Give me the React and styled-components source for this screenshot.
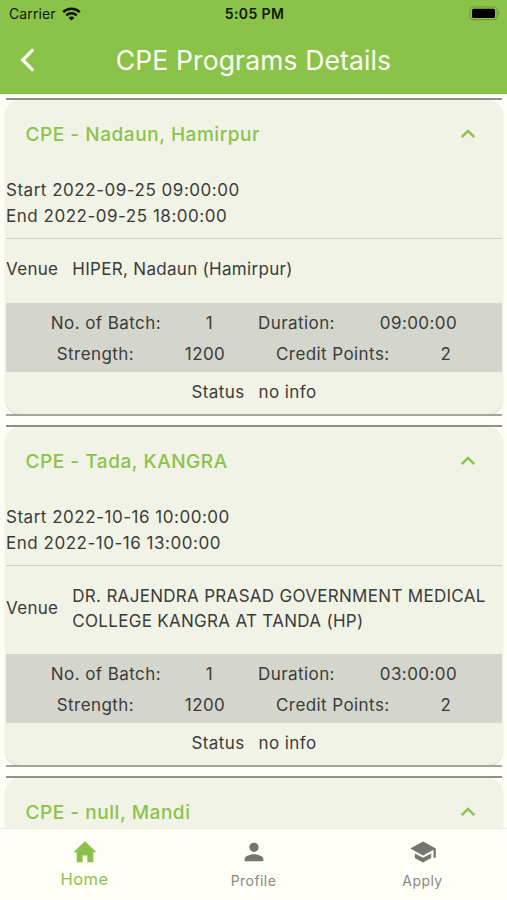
import React from "react";
import styled, { createGlobalStyle } from "styled-components";
import { MdPerson, MdSchool } from "react-icons/md";

const GlobalStyle = createGlobalStyle`
  * { box-sizing: border-box; }
  body { margin: 0; background: #fefef6; }
`;

const Screen = styled.div`
  width: 507px;
  height: 900px;
  overflow: hidden;
  display: flex;
  flex-direction: column;
  background: #fefef6;
  color: #3b3c38;
  font-family: Inter, Roboto, sans-serif;
  font-size: 17px;
  white-space: nowrap;
`;

const Header = styled.header`
  flex: none;
  height: 94px;
  background: #8bc34a;
`;

const StatusBar = styled.div`
  display: grid;
  grid-template-columns: 1fr auto 1fr;
  align-items: center;
  height: 27px;
  padding: 0 7px 0 9px;
  color: #10180a;
  font-size: 14px;
  line-height: 27px;
`;

const Carrier = styled.div`
  display: flex;
  align-items: center;
  gap: 6px;
  letter-spacing: 0.1px;
`;

const Clock = styled.div`
  font-weight: 600;
  letter-spacing: 0.4px;
`;

const Battery = styled.svg`
  justify-self: end;
  display: block;
`;

const TitleBar = styled.div`
  display: grid;
  grid-template-columns: 60px 1fr 60px;
  align-items: center;
  height: 66px;
`;

const BackIcon = styled.svg`
  display: block;
  margin-left: 19px;
`;

const PageTitle = styled.h1`
  margin: 0;
  text-align: center;
  color: #fdfff6;
  font-size: 26.5px;
  font-weight: 400;
  line-height: 66px;
  letter-spacing: 0.13px;
`;

const List = styled.main`
  flex: 1;
  min-height: 0;
  overflow: hidden;
  padding: 4px 4px 0 5px;
`;

const Rule = styled.div`
  height: 2px;
  margin: 0 1px;
  background: ${(p) => p.$color || "#a3a49c"};
`;

const Card = styled.section`
  margin-bottom: 9px;
`;

const CardBody = styled.div`
  height: ${(p) => p.$height}px;
  border-radius: 15px;
  background: #f1f3e7;
  box-shadow: 0 1px 1px rgba(70, 75, 60, 0.22);
`;

const CardHeader = styled.div`
  display: flex;
  align-items: center;
  justify-content: space-between;
  height: 67px;
  padding: 1px 26px 0 20.5px;
  color: #8bc34a;
`;

const CardTitle = styled.h2`
  margin: 0;
  padding-top: 1px;
  font-size: 19px;
  font-weight: 500;
  line-height: 30px;
  letter-spacing: 0.55px;
`;

const Dates = styled.div`
  height: 71px;
  padding: 9.5px 2px 0 1px;
  line-height: 26.5px;
`;

const DateLine = styled.div`
  letter-spacing: 0.52px;
`;

const Divider = styled.div`
  height: 1px;
  margin: 0 1px;
  background: #cfd1c7;
`;

const Venue = styled.div`
  display: flex;
  align-items: center;
  gap: 14px;
  height: ${(p) => p.$height}px;
  padding: 0 0 3px 1px;
  line-height: 24.5px;
  letter-spacing: 0.3px;
`;

const VenueName = styled.div`
  white-space: pre-line;
`;

const Stats = styled.div`
  display: flex;
  flex-direction: column;
  height: 69px;
  margin: 0 1px;
  padding: 4.5px 0 2.5px;
  background: #d4d6cd;
`;

const StatRow = styled.div`
  display: flex;
  justify-content: space-evenly;
  height: 31px;
  line-height: 31px;
  letter-spacing: 0.42px;
`;

const Status = styled.div`
  display: flex;
  justify-content: center;
  gap: 14px;
  line-height: 40px;
  letter-spacing: 0.4px;
`;

const BottomNav = styled.nav`
  flex: none;
  display: grid;
  grid-template-columns: repeat(3, 1fr);
  height: 72px;
  border-top: 1px solid #ebece3;
  background: #fefef6;
`;

const NavItem = styled.div`
  display: flex;
  flex-direction: column;
  align-items: center;
  padding-top: 9px;
  color: ${(p) => (p.$active ? "#8bc34a" : "#757671")};

  svg { flex: none; width: 28px; height: 28px; }
`;

const NavLabel = styled.span`
  margin-top: ${(p) => (p.$active ? 3 : 5)}px;
  font-size: ${(p) => (p.$active ? 16.5 : 14)}px;
  line-height: 20px;
  letter-spacing: 0.45px;
  color: ${(p) => (p.$active ? "#8bc34a" : "#888984")};
`;

const programs = [
  {
    title: "CPE - Nadaun, Hamirpur",
    start: "2022-09-25 09:00:00",
    end: "2022-09-25 18:00:00",
    venue: "HIPER, Nadaun (Hamirpur)",
    duration: "09:00:00",
    venueHeight: 64,
    height: 314,
  },
  {
    title: "CPE - Tada, KANGRA",
    start: "2022-10-16 10:00:00",
    end: "2022-10-16 13:00:00",
    venue: "DR. RAJENDRA PRASAD GOVERNMENT MEDICAL\nCOLLEGE KANGRA AT TANDA (HP)",
    duration: "03:00:00",
    venueHeight: 88,
    height: 338,
  },
  { title: "CPE - null, Mandi", height: 314 },
];

function Chevron() {
  return (
    <svg width="18" height="12" viewBox="0 0 18 12" fill="none" stroke="currentColor" strokeWidth="2.4">
      <path d="M2.7 9.2 9 2.9l6.3 6.3" />
    </svg>
  );
}

function HomeIcon() {
  return (
    <svg viewBox="0 0 28 28" fill="currentColor">
      <path d="M14 3.2 25.6 14.2H22.3V24.2H16.3V17.6H11.7V24.2H5.7V14.2H2.4Z" />
    </svg>
  );
}

function ProgramCard({ program }) {
  return (
    <Card>
      <Rule $color="#8f908a" />
      <CardBody $height={program.height}>
        <CardHeader>
          <CardTitle>{program.title}</CardTitle>
          <Chevron />
        </CardHeader>
        {program.start && (
          <>
            <Dates>
              <DateLine>Start {program.start}</DateLine>
              <DateLine>End {program.end}</DateLine>
            </Dates>
            <Divider />
            <Venue $height={program.venueHeight}>
              <span>Venue</span>
              <VenueName>{program.venue}</VenueName>
            </Venue>
            <Stats>
              <StatRow>
                <span>No. of Batch:</span>
                <span>1</span>
                <span>Duration:</span>
                <span>{program.duration}</span>
              </StatRow>
              <StatRow>
                <span>Strength:</span>
                <span>1200</span>
                <span>Credit Points:</span>
                <span>2</span>
              </StatRow>
            </Stats>
            <Status>
              <span>Status</span>
              <span>no info</span>
            </Status>
          </>
        )}
      </CardBody>
      <Rule />
    </Card>
  );
}

export default function App() {
  return (
    <Screen>
      <GlobalStyle />
      <Header>
        <StatusBar>
          <Carrier>
            <span>Carrier</span>
            <svg width="19" height="14" viewBox="0 0 19 14" fill="none" stroke="#0b1005" strokeWidth="2.5">
              <path d="M1.2 5.1C5.9.6 13.1.6 17.8 5.1" />
              <path d="M4.3 8.3c3-2.8 7.4-2.8 10.4 0" />
              <path d="M9.5 13.6 6.6 10.7c1.6-1.5 4.2-1.5 5.8 0z" fill="#0b1005" stroke="none" />
            </svg>
          </Carrier>
          <Clock>5:05 PM</Clock>
          <Battery width="31" height="15" viewBox="0 0 31 15">
            <rect x="0.8" y="1" width="27.4" height="12.6" rx="3.8" fill="none" stroke="#6b9a3a" strokeWidth="1.1" />
            <rect x="3" y="2.7" width="23" height="9.4" rx="1.6" fill="#000" />
            <path d="M29.2 5.2c1.8.6 1.8 3.6 0 4.2z" fill="#6b9a3a" />
          </Battery>
        </StatusBar>
        <TitleBar>
          <BackIcon width="18" height="26" viewBox="0 0 18 26" fill="none" stroke="#fdfff6" strokeWidth="3.2">
            <path d="M14.3 2.3 3.7 13l10.6 10.7" />
          </BackIcon>
          <PageTitle>CPE Programs Details</PageTitle>
        </TitleBar>
      </Header>
      <List>
        {programs.map((p) => (
          <ProgramCard key={p.title} program={p} />
        ))}
      </List>
      <BottomNav>
        <NavItem $active>
          <HomeIcon />
          <NavLabel $active>Home</NavLabel>
        </NavItem>
        <NavItem>
          <MdPerson />
          <NavLabel>Profile</NavLabel>
        </NavItem>
        <NavItem>
          <MdSchool />
          <NavLabel>Apply</NavLabel>
        </NavItem>
      </BottomNav>
    </Screen>
  );
}
